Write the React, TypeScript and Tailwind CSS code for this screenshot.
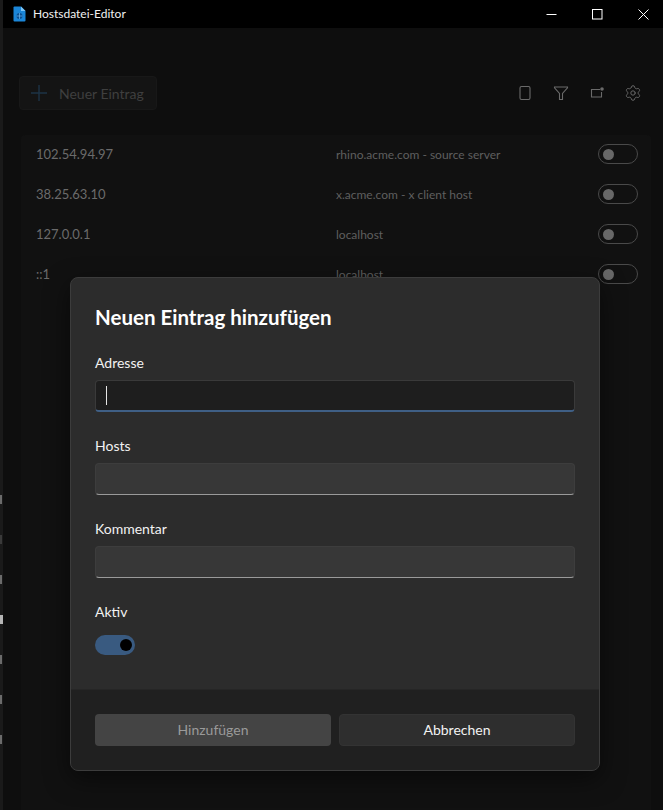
import React from "react";
import { Settings } from "lucide-react";

const entries = [
  { address: "102.54.94.97", hosts: "rhino.acme.com - source server" },
  { address: "38.25.63.10", hosts: "x.acme.com - x client host" },
  { address: "127.0.0.1", hosts: "localhost" },
  { address: "::1", hosts: "localhost" },
];

const fontClass = "font-['Lato','Open_Sans',sans-serif]";

function AppIcon() {
  return (
    <svg width="13" height="16" viewBox="0 0 13 16">
      <path d="M0.5 1.5 Q0.5 0.5 1.5 0.5 H8 L12.5 5 V14.5 Q12.5 15.5 11.5 15.5 H1.5 Q0.5 15.5 0.5 14.5 Z" fill="#1b86d8" />
      <path d="M8 0.5 L12.5 5 H8 Z" fill="#7cc4f5" />
      <circle cx="6.5" cy="10" r="3" fill="#0a4f92" />
      <path d="M3.5 10 H9.5 M6.5 7 V13" stroke="#6fb8ee" strokeWidth="0.7" />
    </svg>
  );
}

function WindowControls() {
  return (
    <div className="flex items-center pr-[14px] gap-[35px]">
      <svg width="11" height="11" viewBox="0 0 11 11">
        <path d="M0.5 5.5 H10.5" stroke="#fff" strokeWidth="1" />
      </svg>
      <svg width="11" height="11" viewBox="0 0 11 11">
        <rect x="0.5" y="0.5" width="9.5" height="9.5" fill="none" stroke="#fff" strokeWidth="1" />
      </svg>
      <svg width="11" height="11" viewBox="0 0 11 11">
        <path d="M0.5 0.5 L10.5 10.5 M10.5 0.5 L0.5 10.5" stroke="#fff" strokeWidth="1" />
      </svg>
    </div>
  );
}

function ToolbarIcons() {
  return (
    <div className="flex items-center gap-[20px] text-[#6a6a6a]">
      <svg width="16" height="16" viewBox="0 0 16 16" fill="none" stroke="currentColor" strokeWidth="1.1">
        <rect x="3" y="1.5" width="10" height="13" rx="1.5" />
      </svg>
      <svg width="16" height="16" viewBox="0 0 16 16" fill="none" stroke="currentColor" strokeWidth="1.1">
        <path d="M1.5 2 H14.5 V2.8 L9.5 8.5 V14.5 H6.5 V8.5 L1.5 2.8 Z" />
      </svg>
      <svg width="16" height="16" viewBox="0 0 16 16" fill="none" stroke="currentColor" strokeWidth="1.1">
        <path d="M11 4.5 H2.5 V12 H12.5 V7" />
        <circle cx="13" cy="4" r="1.8" fill="currentColor" stroke="none" />
      </svg>
      <Settings size={16} strokeWidth={1.3} className="scale-110" />
    </div>
  );
}

function EntryRow({ address, hosts }: { address: string; hosts: string }) {
  return (
    <div className="flex h-10 items-center pl-[15px] pr-[2px]">
      <span className="w-[300px] text-[13px] text-[#6b6b6b]">{address}</span>
      <span className="flex-1 text-[12px] text-[#5f5f5f]">{hosts}</span>
      <span className="mb-[2px] flex h-5 w-10 items-center rounded-full border border-[#4a4a4a] pl-[4px]">
        <span className="h-[11px] w-[11px] rounded-full bg-[#686868]" />
      </span>
    </div>
  );
}

function Field({ label, focused }: { label: string; focused?: boolean }) {
  return (
    <div className="flex flex-col">
      <label className="mb-[7px] h-[20px] text-[14px] leading-[20px] text-[#f2f2f2]">{label}</label>
      {focused ? (
        <div className="flex h-[32px] items-center rounded-[4px] border border-[#3a3a3a] border-b-2 border-b-[#3f5f85] bg-[#1e1e1e] pl-[10px]">
          <span className="h-[19px] w-px bg-[#e6e6e6]" />
        </div>
      ) : (
        <div className="h-[32px] rounded-[4px] border border-[#3d3d3d] border-b-[#9a9a9a] bg-[#373737]" />
      )}
    </div>
  );
}

export default function App() {
  return (
    <div className={`relative flex h-[810px] w-[663px] overflow-hidden bg-[#0e0e0e] ${fontClass}`}>
      {/* Window behind, only its edge shows */}
      <div className="flex w-[3px] flex-col bg-[#1a1a1a] pt-[495px] gap-[31px]">
        <div className="h-[9px] w-[2px] bg-[#6b6b6b]" />
        <div className="h-[9px] w-[2px] bg-[#3a3a3a]" />
        <div className="h-[9px] w-[2px] bg-[#6b6b6b]" />
        <div className="h-[9px] w-[3px] bg-[#b5b5b5]" />
        <div className="h-[9px] w-[2px] bg-[#6b6b6b]" />
        <div className="h-[9px] w-[2px] bg-[#6b6b6b]" />
        <div className="h-[9px] w-[2px] bg-[#6b6b6b]" />
      </div>

      <div className="flex flex-1 flex-col">
        <div className="flex h-[28px] items-center justify-between bg-black">
          <div className="flex items-center gap-[7px] pl-[10px]">
            <AppIcon />
            <span className="text-[12px] text-[#f0f0f0]">Hostsdatei-Editor</span>
          </div>
          <WindowControls />
        </div>

        {/* Main page, dimmed by the dialog */}
        <div className="flex items-center justify-between pl-[16px] pr-[22px] pt-[48px]">
          <div className="flex h-[34px] w-[138px] items-center gap-[12px] rounded-[4px] border border-[#181818] bg-[#141414] pl-[10px]">
            <svg width="18" height="18" viewBox="0 0 18 18">
              <path d="M9 1 V17 M1 9 H17" stroke="#1d3346" strokeWidth="1.4" />
            </svg>
            <span className="ml-[-1px] text-[14px] text-[#3f3f3f]">Neuer Eintrag</span>
          </div>
          <ToolbarIcons />
        </div>

        <div className="ml-[18px] mr-[12px] mt-[25px] flex-1 rounded-t-[4px] bg-[#111111] pr-[11px]">
          {entries.map((entry) => (
            <EntryRow key={entry.address} address={entry.address} hosts={entry.hosts} />
          ))}
        </div>
      </div>

      {/* Dialog */}
      <div className="absolute left-[70px] top-[277px] flex h-[494px] w-[530px] flex-col overflow-hidden rounded-[8px] border border-[#3c3c3c] bg-[#2c2c2c] shadow-[0_8px_24px_rgba(0,0,0,0.5)]">
        <div className="flex flex-1 flex-col px-[24px] pt-[25px]">
          <h2 className="mb-[22px] h-[28px] text-[20.5px] font-bold leading-[28px] text-white">Neuen Eintrag hinzufügen</h2>
          <div className="flex flex-col gap-[24px]">
            <Field label="Adresse" focused />
            <Field label="Hosts" />
            <Field label="Kommentar" />
            <div className="flex flex-col">
              <label className="mb-[13px] h-[20px] text-[14px] leading-[20px] text-[#f2f2f2]">Aktiv</label>
              <span className="flex h-5 w-10 items-center justify-end rounded-full bg-[#395a80] pr-[3px]">
                <span className="h-[12px] w-[12px] rounded-full bg-black" />
              </span>
            </div>
          </div>
        </div>
        <div className="flex h-[81px] gap-[8px] border-t border-[#262626] bg-[#202020] px-[24px] pt-[24px]">
          <button className="h-[32px] w-[236px] rounded-[4px] bg-[#444444] pb-[1px] text-[14px] text-[#9a9a9a]">Hinzufügen</button>
          <button className="h-[32px] w-[236px] rounded-[4px] border border-[#333333] bg-[#2e2e2e] pb-[1px] text-[14px] text-[#f2f2f2]">Abbrechen</button>
        </div>
      </div>
    </div>
  );
}
